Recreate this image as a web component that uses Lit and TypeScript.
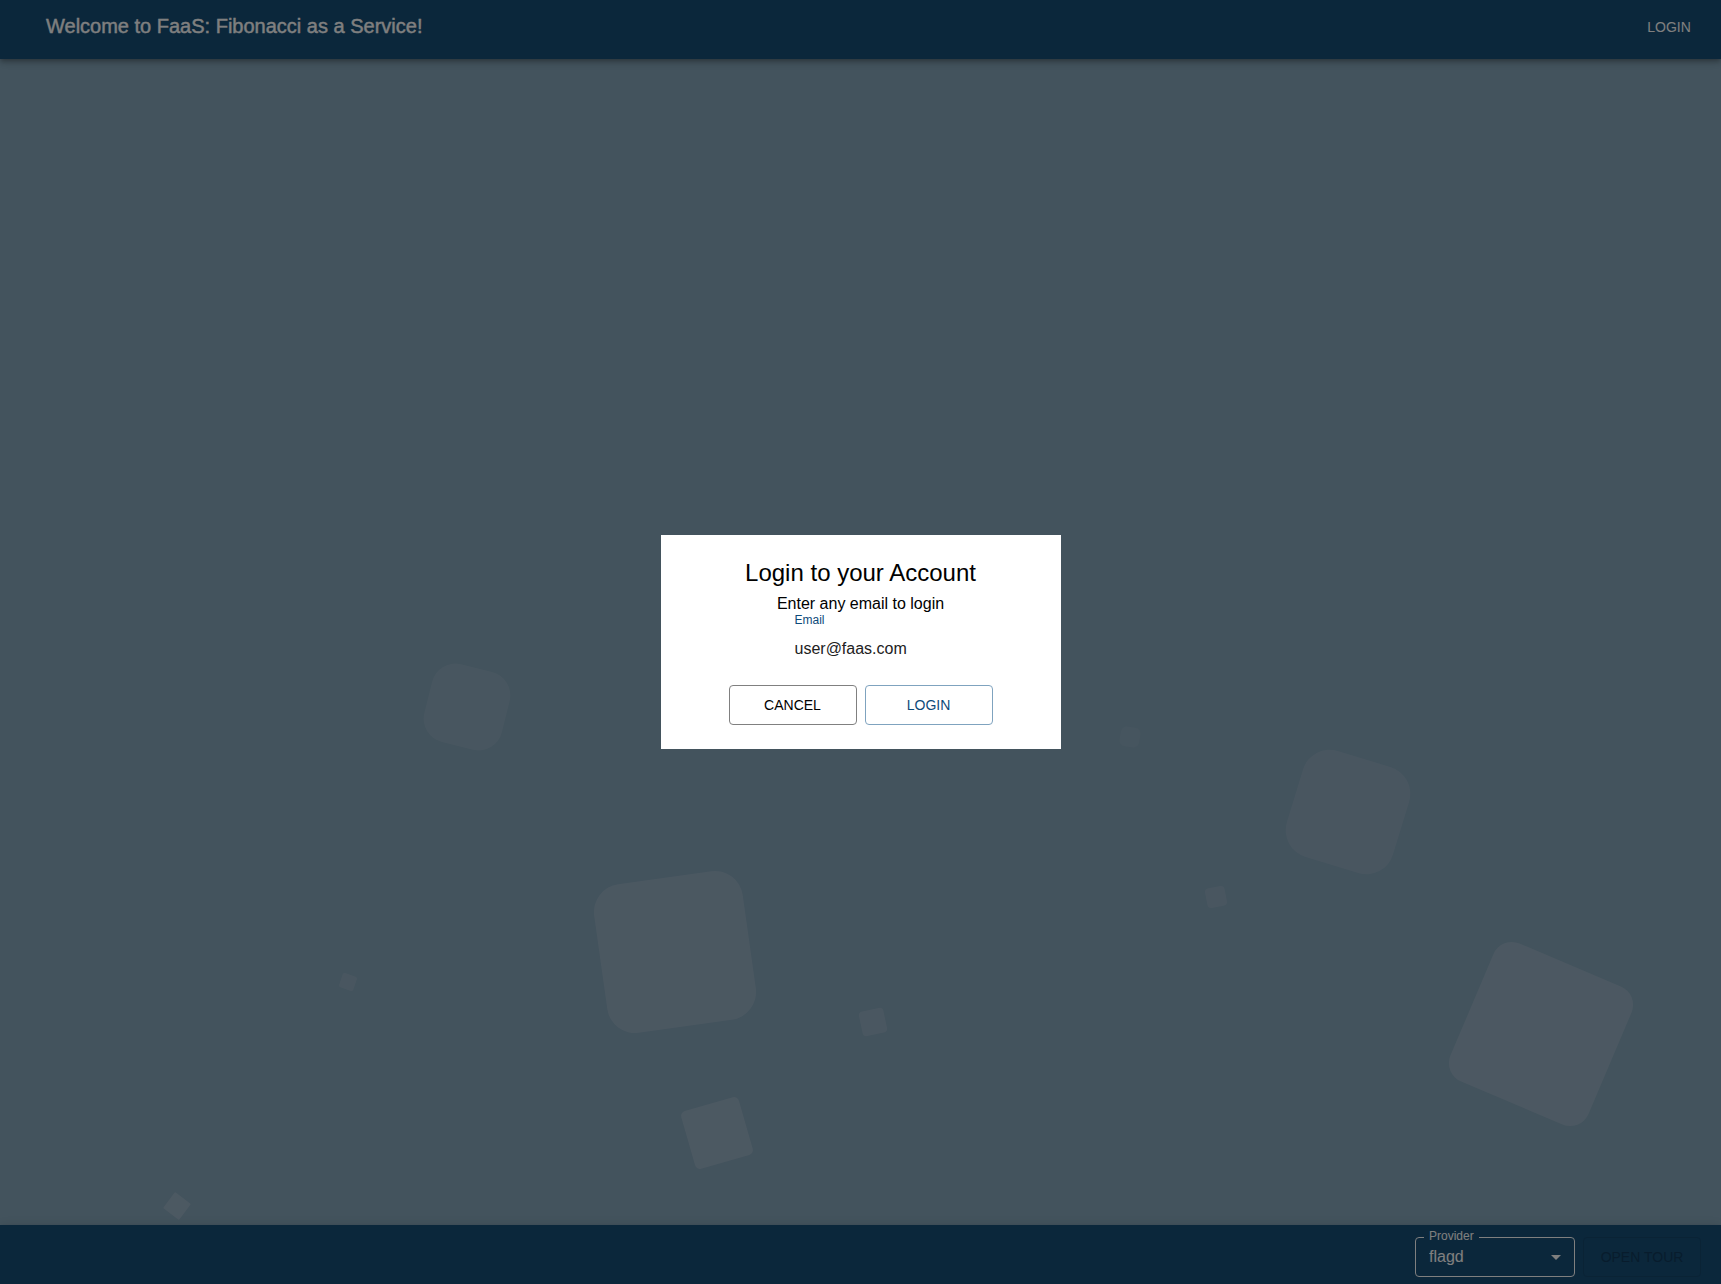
import { LitElement, html, svg, css } from "lit";
import { customElement, state } from "lit/decorators.js";

interface Tile {
  cx: number;
  cy: number;
  size: number;
  radius: number;
  angle: number;
  fade: number;
}

const TILES: Tile[] = [
  { cx: 467, cy: 707, size: 80, radius: 24, angle: 14, fade: 0.09 },
  { cx: 1130, cy: 737, size: 20, radius: 6, angle: 10, fade: 0.06 },
  { cx: 1348, cy: 812, size: 111, radius: 28, angle: 17, fade: 0.1 },
  { cx: 1216, cy: 897, size: 20, radius: 4, angle: -11, fade: 0.1 },
  { cx: 675, cy: 952, size: 150, radius: 28, angle: -8, fade: 0.14 },
  { cx: 348, cy: 982, size: 15, radius: 2, angle: 19, fade: 0.11 },
  { cx: 873, cy: 1022, size: 25, radius: 4, angle: -12, fade: 0.13 },
  { cx: 1541, cy: 1034, size: 150, radius: 20, angle: 23, fade: 0.15 },
  { cx: 717, cy: 1133, size: 60, radius: 5, angle: -16, fade: 0.16 },
  { cx: 177, cy: 1206, size: 20, radius: 1, angle: 37, fade: 0.16 },
];

@customElement("floating-tiles")
export class FloatingTiles extends LitElement {
  static styles = css`
    :host {
      display: block;
      position: absolute;
      inset: 0;
      overflow: hidden;
    }
    .tiles {
      display: block;
      width: 100%;
      height: 100%;
    }
    .tile {
      fill: #fff0ff;
    }
  `;

  render() {
    return html`<svg
      class="tiles"
      viewBox="0 0 1721 1284"
      preserveAspectRatio="xMidYMax slice"
      aria-hidden="true"
    >
      ${TILES.map(
        (t) => svg`<rect
          class="tile"
          x=${t.cx - t.size / 2}
          y=${t.cy - t.size / 2}
          width=${t.size}
          height=${t.size}
          rx=${t.radius}
          fill-opacity=${t.fade}
          transform="rotate(${t.angle} ${t.cx} ${t.cy})"
        />`
      )}
    </svg>`;
  }
}

@customElement("login-dialog")
export class LoginDialog extends LitElement {
  static styles = css`
    :host {
      display: flex;
      position: fixed;
      inset: 0;
      z-index: 10;
      align-items: center;
      justify-content: center;
      background: rgba(0, 0, 0, 0.5);
    }
    .panel {
      box-sizing: border-box;
      display: flex;
      flex-direction: column;
      align-items: center;
      width: 400px;
      max-width: 100%;
      padding: 24px;
      background: #fff;
      color: #000;
    }
    .title {
      margin: 0;
      font-size: 24px;
      font-weight: 400;
      line-height: 28px;
    }
    .hint {
      margin: 8px 0 0;
      font-size: 16px;
      line-height: 18px;
    }
    .field {
      box-sizing: border-box;
      display: flex;
      flex-direction: column;
      gap: 10px;
      width: 160px;
      padding: 0 14px;
    }
    .label {
      color: #0d4a7a;
      font-size: 12px;
      line-height: 14px;
    }
    .input {
      width: 100%;
      height: 24px;
      padding: 0;
      border: 0;
      outline: 0;
      background: none;
      color: #212121;
      font: inherit;
      font-size: 16px;
    }
    .actions {
      display: flex;
      gap: 8px;
      margin-top: 24px;
    }
    .button {
      width: 128px;
      height: 40px;
      border: 1px solid #808080;
      border-radius: 4px;
      background: none;
      color: #000;
      font: inherit;
      font-size: 14px;
      text-transform: uppercase;
      cursor: pointer;
    }
    .primary {
      border-color: #7fa3bf;
      color: #0d4a7a;
    }
  `;

  @state() private email = "user@faas.com";

  render() {
    return html`<section class="panel" role="dialog" aria-modal="true" aria-labelledby="title">
      <h2 class="title" id="title">Login to your Account</h2>
      <p class="hint">Enter any email to login</p>
      <div class="field">
        <label class="label" for="email">Email</label>
        <input
          class="input"
          id="email"
          type="email"
          .value=${this.email}
          @input=${(e: Event) => (this.email = (e.target as HTMLInputElement).value)}
        />
      </div>
      <div class="actions">
        <button class="button" type="button">Cancel</button>
        <button class="button primary" type="button">Login</button>
      </div>
    </section>`;
  }
}

@customElement("app-root")
export class AppRoot extends LitElement {
  static styles = css`
    :host {
      display: flex;
      flex-direction: column;
      position: relative;
      min-height: 100vh;
      background: #86a6ba;
      color: #fff;
      font-family: "Liberation Sans", Arial, Helvetica, sans-serif;
    }
    .bar {
      box-sizing: border-box;
      display: flex;
      position: relative;
      min-height: 59px;
      background: #164e76;
      box-shadow: 0 2px 4px -1px rgba(0, 0, 0, 0.2), 0 4px 5px rgba(0, 0, 0, 0.14),
        0 1px 10px rgba(0, 0, 0, 0.12);
    }
    .top {
      align-items: flex-start;
      justify-content: space-between;
      padding: 12px 20px 12px 46px;
    }
    .heading {
      margin: 0;
      font-size: 20px;
      font-weight: 400;
      line-height: 28px;
      -webkit-text-stroke: 0.4px currentColor;
    }
    .login {
      min-width: 64px;
      padding: 0 8px;
      border: 0;
      background: none;
      color: inherit;
      font: inherit;
      font-size: 14px;
      line-height: 30px;
      text-transform: uppercase;
      cursor: pointer;
    }
    .stage {
      flex: 1;
    }
    .bottom {
      align-items: flex-start;
      justify-content: flex-end;
      gap: 8px;
      padding: 12px 20px 7px;
    }
    .provider {
      position: relative;
      width: 160px;
    }
    .caption {
      position: absolute;
      top: -8px;
      left: 9px;
      padding: 0 5px;
      background: #164e76;
      font-size: 12px;
      line-height: 14px;
    }
    .select {
      width: 100%;
      height: 40px;
      padding: 0 32px 2px 13px;
      border: 1px solid #fff;
      border-radius: 4px;
      appearance: none;
      background: none;
      color: inherit;
      font: inherit;
      font-size: 16px;
    }
    .arrow {
      position: absolute;
      top: 8px;
      right: 7px;
      width: 24px;
      height: 24px;
      fill: currentColor;
      pointer-events: none;
    }
    .tour {
      min-width: 118px;
      height: 40px;
      padding: 0 16px;
      border: 1px solid #14466b;
      border-radius: 4px;
      background: none;
      color: #10395a;
      font: inherit;
      font-size: 14px;
      text-transform: uppercase;
    }
  `;

  render() {
    return html`
      <floating-tiles></floating-tiles>
      <header class="bar top">
        <h1 class="heading">Welcome to FaaS: Fibonacci as a Service!</h1>
        <button class="login" type="button">Login</button>
      </header>
      <main class="stage"></main>
      <footer class="bar bottom">
        <div class="provider">
          <select class="select" id="provider">
            <option selected>flagd</option>
          </select>
          <label class="caption" for="provider">Provider</label>
          <svg class="arrow" viewBox="0 0 24 24" aria-hidden="true">
            <path d="M7 10l5 5 5-5z"></path>
          </svg>
        </div>
        <button class="tour" type="button" disabled>Open Tour</button>
      </footer>
      <login-dialog></login-dialog>
    `;
  }
}
